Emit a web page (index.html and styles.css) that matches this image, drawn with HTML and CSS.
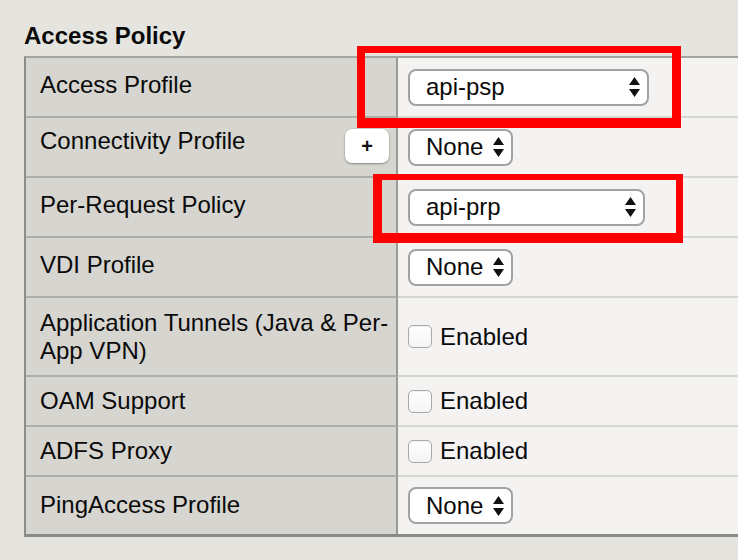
FILE: index.html
```html
<!DOCTYPE html>
<html>
<head>
<meta charset="utf-8">
<link rel="stylesheet" href="styles.css">
</head>
<body>
<div class="page">
  <h2 class="title">Access Policy</h2>
  <div class="policy">
    <div class="row">
      <div class="label lift">Access Profile</div>
      <div class="value">
        <div class="select wide1"><span>api-psp</span><svg class="arrows" width="11" height="20" viewBox="0 0 11 20"><path d="M5.5 0 L11 8 L0 8 Z M0 12 L11 12 L5.5 20 Z" fill="#111"/></svg></div>
      </div>
    </div>
    <div class="row">
      <div class="label split"><span class="lift2">Connectivity Profile</span><button class="plus">+</button></div>
      <div class="value">
        <div class="select narrow"><span>None</span><svg class="arrows" width="11" height="20" viewBox="0 0 11 20"><path d="M5.5 0 L11 8 L0 8 Z M0 12 L11 12 L5.5 20 Z" fill="#111"/></svg></div>
      </div>
    </div>
    <div class="row">
      <div class="label lift">Per-Request Policy</div>
      <div class="value">
        <div class="select wide2"><span>api-prp</span><svg class="arrows" width="11" height="20" viewBox="0 0 11 20"><path d="M5.5 0 L11 8 L0 8 Z M0 12 L11 12 L5.5 20 Z" fill="#111"/></svg></div>
      </div>
    </div>
    <div class="row">
      <div class="label lift">VDI Profile</div>
      <div class="value">
        <div class="select narrow"><span>None</span><svg class="arrows" width="11" height="20" viewBox="0 0 11 20"><path d="M5.5 0 L11 8 L0 8 Z M0 12 L11 12 L5.5 20 Z" fill="#111"/></svg></div>
      </div>
    </div>
    <div class="row tall">
      <div class="label multi">Application Tunnels (Java &amp; Per-<br>App VPN)</div>
      <div class="value">
        <label class="check"><span class="box"></span>Enabled</label>
      </div>
    </div>
    <div class="row short">
      <div class="label">OAM Support</div>
      <div class="value">
        <label class="check"><span class="box"></span>Enabled</label>
      </div>
    </div>
    <div class="row short">
      <div class="label">ADFS Proxy</div>
      <div class="value">
        <label class="check"><span class="box"></span>Enabled</label>
      </div>
    </div>
    <div class="row last">
      <div class="label lift1">PingAccess Profile</div>
      <div class="value">
        <div class="select narrow"><span>None</span><svg class="arrows" width="11" height="20" viewBox="0 0 11 20"><path d="M5.5 0 L11 8 L0 8 Z M0 12 L11 12 L5.5 20 Z" fill="#111"/></svg></div>
      </div>
    </div>
    <div class="mark mark1"></div>
    <div class="mark mark2"></div>
  </div>
</div>
</body>
</html>
```

FILE: styles.css
```css
html, body {
  margin: 0;
  padding: 0;
  background: #e5e4df;
  overflow: hidden;
  width: 738px;
  height: 560px;
}

.page {
  padding: 22px 0 0 24px;
  font-family: "Liberation Sans", Arial, sans-serif;
  color: #0a0a0a;
}

.title {
  margin: 0 0 6px 0;
  font-size: 24px;
  line-height: 28px;
  font-weight: bold;
}

.policy {
  position: relative;
  width: 740px;
  border-left: 2px solid #8c8c8a;
  border-top: 2px solid #a3a3a0;
  border-bottom: 3px solid #8a8a88;
}

.row {
  display: grid;
  grid-template-columns: 372px 1fr;
  height: 60px;
  font-size: 24px;
}

.row.tall { height: 79px; }
.row.short { height: 50px; }
.row.last { height: 57px; }

.label {
  background: #d6d5d0;
  border-right: 2px solid #9a9a98;
  border-bottom: 2px solid #adadaa;
  padding-left: 14px;
  display: flex;
  align-items: center;
  line-height: 28px;
}

.value {
  background: #f4f3f1;
  border-bottom: 2px solid #d6d6d3;
  padding-left: 10px;
  display: flex;
  align-items: center;
}

.row.last .label,
.row.last .value {
  border-bottom: none;
}

.lift { padding-bottom: 5px; }
.lift1 { padding-bottom: 2px; }

.split {
  justify-content: space-between;
  padding-right: 7px;
}

.lift2 { margin-bottom: 12px; }

.plus {
  width: 44px;
  height: 34px;
  border: none;
  border-radius: 7px;
  background: #fff;
  box-shadow: 0 1px 2px rgba(0,0,0,0.35), 0 0 0 0.5px rgba(0,0,0,0.08);
  font-family: "Liberation Sans", Arial, sans-serif;
  font-size: 20px;
  font-weight: bold;
  line-height: 34px;
  padding: 0;
  color: #111;
  position: relative;
  top: -1px;
}

.select {
  box-sizing: border-box;
  height: 37px;
  background: #fff;
  border: 2px solid #a2a2a2;
  border-radius: 8px;
  display: flex;
  align-items: center;
  justify-content: space-between;
  padding: 0 7px 0 16px;
  font-size: 24px;
}

.wide1 { width: 241px; }
.wide2 { width: 237px; }
.narrow { width: 105px; }

.arrows { display: block; }

.check {
  display: flex;
  align-items: center;
  gap: 8px;
  font-size: 24px;
}

.box {
  box-sizing: border-box;
  width: 24px;
  height: 23px;
  border: 1px solid #a9a9a9;
  border-radius: 5px;
  background: linear-gradient(#ffffff, #f4f4f4);
  box-shadow: inset 0 1px 1px rgba(0,0,0,0.06);
}

.mark {
  position: absolute;
  border-style: solid;
  border-color: #fe0000;
  box-sizing: border-box;
  pointer-events: none;
}

.mark1 {
  left: 331px;
  top: -12px;
  width: 324px;
  height: 82px;
  border-width: 7px 9px 10px 8px;
}

.mark2 {
  left: 347px;
  top: 116px;
  width: 310px;
  height: 69px;
  border-width: 6px 7px 10px 9px;
}
```
